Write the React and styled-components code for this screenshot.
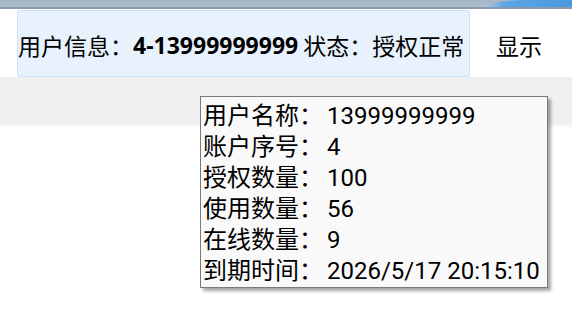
import React from 'react'
import styled, { createGlobalStyle } from 'styled-components';

const GlobalStyle = createGlobalStyle`
  html, body {
    margin: 0;
    padding: 0;
    background: #ffffff;
    overflow: hidden;
  }
  body {
    font-family: "Noto Sans CJK SC", "Noto Sans", sans-serif;
    color: #000;
  }
`

const tipRows = [
  ['用户名称：', '13999999999'],
  ['账户序号：', '4'],
  ['授权数量：', '100'],
  ['使用数量：', '56'],
  ['在线数量：', '9'],
  ['到期时间：', '2026/5/17 20:15:10'],
];

const App = () => {
  return (
    <>
      <GlobalStyle />
      <Page>
        <TitleStrip>
          <Swoosh viewBox="0 0 572 8" preserveAspectRatio="none">
            <defs>
              <linearGradient id="sw" x1="0" x2="1" y1="0" y2="0">
                <stop offset="0" stopColor="#b9cde0" />
                <stop offset="0.25" stopColor="#5da5e6" />
                <stop offset="1" stopColor="#4a98e0" />
              </linearGradient>
            </defs>
            <polygon points="482,8 500,2 520,0 572,0 572,8" fill="url(#sw)" />
          </Swoosh>
        </TitleStrip>
        <InfoBar>
          <InfoBox>
            <span>用户信息：</span>
            <Strong>4-13999999999</Strong>
            <span> 状态：授权正常</span>
          </InfoBox>
          <MoreText>显示</MoreText>
        </InfoBar>
        <GrayBand>
          <Tooltip>
            {tipRows.map(([label, value], i) => (
              <TipRow key={i}>
                <span>{label}</span>
                <span>{value}</span>
              </TipRow>
            ))}
          </Tooltip>
        </GrayBand>
        <Divider />
      </Page>
    </>
  )
}

export default App;

const Page = styled.div`
  width: 572px;
  height: 336px;
  background: #ffffff;
  overflow: hidden;
  display: flex;
  flex-direction: column;
`
const TitleStrip = styled.div`
  position: relative;
  height: 7px;
  background: linear-gradient(#a6b6c7, #aebdcc);
  border-bottom: 2px solid #8a9aac;
`
const Swoosh = styled.svg`
  position: absolute;
  left: 0;
  top: 0;
  width: 572px;
  height: 7px;
`
const InfoBar = styled.div`
  display: flex;
  align-items: stretch;
  gap: 26px;
  padding: 1px 0 0 17px;
  height: 68px;
  box-sizing: border-box;
  white-space: nowrap;
`
const InfoBox = styled.div`
  display: flex;
  align-items: center;
  width: 453px;
  height: 67px;
  box-sizing: border-box;
  padding-top: 2px;
  background: #e8f2fc;
  border: 1px solid #cfe1f5;
  border-radius: 2px;
  font-size: 23px;
  color: #000;
  span { white-space: pre; }
`
const Strong = styled.span`
  font-weight: 700;
  font-family: "Open Sans", "Noto Sans CJK SC", sans-serif;
`
const MoreText = styled.div`
  display: flex;
  align-items: center;
  padding-top: 2px;
  font-size: 23px;
`
const GrayBand = styled.div`
  position: relative;
  height: 47px;
  background: #f0f0f0;
`
const Divider = styled.div`
  height: 3px;
  background: #f7f7f7;
`
const Tooltip = styled.div`
  position: absolute;
  left: 200px;
  top: 19px;
  width: 348px;
  height: 192px;
  box-sizing: border-box;
  padding: 4px 2px 0;
  background: #f9f9f9;
  border: 1px solid #7a7a7a;
  box-shadow: 3px 3px 3px rgba(0, 0, 0, 0.35);
  z-index: 2;
  display: flex;
  flex-direction: column;
  justify-content: center;
`
const TipRow = styled.div`
  display: flex;
  font-family: Roboto, "Noto Sans CJK SC", sans-serif;
  font-size: 24px;
  line-height: 31px;
  white-space: nowrap;
  span:last-child {
    margin-left: 4px;
  }
`
